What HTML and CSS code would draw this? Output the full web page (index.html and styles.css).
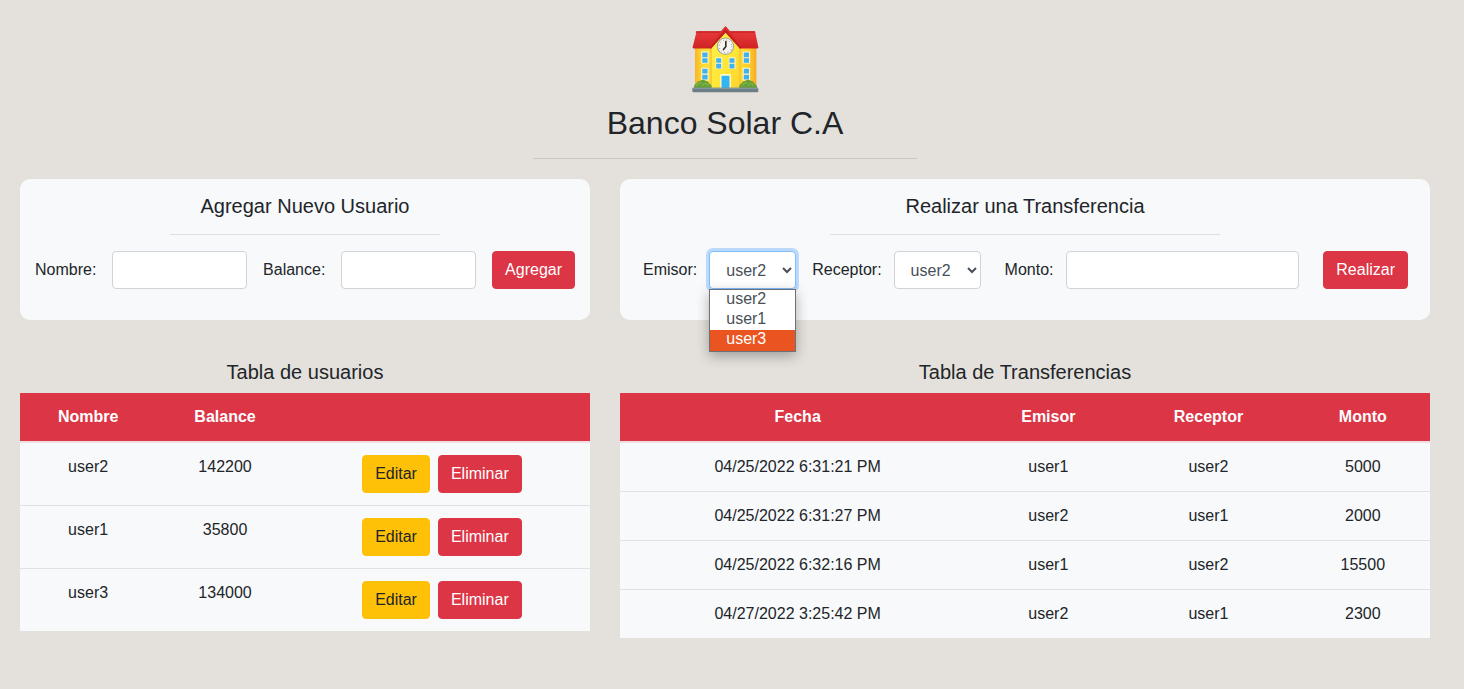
FILE: index.html
```html
<!DOCTYPE html>
<html lang="es">
<head>
<meta charset="utf-8">
<meta name="viewport" content="width=device-width, initial-scale=1">
<title>Banco Solar C.A</title>
<link rel="stylesheet" href="styles.css">
</head>
<body>
<header class="header">
  <svg class="logo" viewBox="20 18 202 202" aria-hidden="true">
    <defs>
      <linearGradient id="wall" x1="0" x2="1"><stop offset="0" stop-color="#fbb523"/><stop offset=".12" stop-color="#fdd835"/><stop offset=".5" stop-color="#ffe93b"/><stop offset=".88" stop-color="#fdd02f"/><stop offset="1" stop-color="#f9a825"/></linearGradient>
      <linearGradient id="front" x1="0" y1="0" x2="1" y2="1"><stop offset="0" stop-color="#fff04a"/><stop offset=".6" stop-color="#ffe636"/><stop offset="1" stop-color="#fdd22f"/></linearGradient>
      <linearGradient id="roof" x1="0" y1="0" x2="0" y2="1"><stop offset="0" stop-color="#e83a3a"/><stop offset="1" stop-color="#cf2323"/></linearGradient>
    </defs>
    <path d="M29 80h185v126H29z" fill="url(#wall)"/>
    <path d="M34 34h176l10 48q0 4-4 4H26q-4 0-4-4z" fill="url(#roof)"/>
    <path d="M33 34h177l1 4H31z" fill="#c72626"/>
    <path d="M79 78l42-49 42 49v128H79z" fill="url(#front)"/>
    <path d="M76 86h3v120h-3zM163 86h3v120h-3z" fill="#f7bb2b"/>
    <path d="M121 19l51 58q3 8-8 9l-43-48-43 48q-11-1-8-9z" fill="#c51f22"/>
    <path d="M121 19l51 58-5 2-46-52-46 52-5-2z" fill="#df3030"/>
    <circle cx="121" cy="79" r="26" fill="#9aa0a2"/>
    <circle cx="121" cy="79" r="23" fill="#f7f5ee"/>
    <circle cx="121" cy="79" r="19" fill="none" stroke="#8b8b88" stroke-width="3" stroke-dasharray="3 6.95"/>
    <path d="M122 65v15l-7 9" fill="none" stroke="#333" stroke-width="5" stroke-linecap="round" stroke-linejoin="round"/>
    <g fill="#fff9cf"><path d="M48 95h22v36H48zM48 144h22v38H48zM173 95h22v36h-22zM173 144h22v38h-22zM91 112h20v36H91zM131 112h20v36h-20zM105 163h32v43h-32z"/></g>
    <g fill="#42b1ed"><path d="M51 98h16v14H51zM51 115h16v14H51zM51 147h16v14H51zM51 165h16v14H51zM176 98h16v14h-16zM176 115h16v14h-16zM176 147h16v14h-16zM176 165h16v14h-16zM93 115h15v14H93zM93 132h15v14H93zM133 115h15v14h-15zM133 132h15v14h-15z"/></g>
    <path d="M109 168h24v38h-24z" fill="#35b4f4"/>
    <path d="M27 205q-3-11 6-14 3-8 12-8 8-6 16 0 9 1 11 8 9 3 7 14zM163 205q-3-11 6-14 3-8 12-8 8-6 16 0 9 1 11 8 9 3 8 14z" fill="#689f38"/>
    <path d="M34 197q6-9 13-7m5 6q9-10 17 1M171 197q6-9 13-7m5 6q9-10 17 1" fill="none" stroke="#7cb342" stroke-width="5" stroke-linecap="round"/>
    <rect x="21" y="204" width="199" height="14" rx="3" fill="#6c7f88"/>
    <path d="M22 204h197v4H22z" fill="#86979f"/>
  </svg>
  <h1 class="brand">Banco Solar C.A</h1>
  <hr class="brand-rule">
</header>
<main class="board">
  <section class="card">
    <h2 class="title">Agregar Nuevo Usuario</h2>
    <hr class="rule">
    <form class="user-form">
      <label for="nombre">Nombre:</label>
      <input class="control" id="nombre" type="text">
      <label for="balance">Balance:</label>
      <input class="control" id="balance" type="text">
      <button class="btn btn-danger" type="button">Agregar</button>
    </form>
  </section>

  <section class="card">
    <h2 class="title">Realizar una Transferencia</h2>
    <hr class="rule">
    <form class="transfer-form">
      <div class="pickers">
        <div class="field">
          <label for="emisor">Emisor:</label>
          <div class="picker">
            <select class="control picker-open" id="emisor"><option>user2</option><option>user1</option><option>user3</option></select>
            <ul class="menu" role="listbox" aria-label="Emisor">
              <li class="option" role="option">user2</li>
              <li class="option" role="option">user1</li>
              <li class="option option-active" role="option" aria-selected="true">user3</li>
            </ul>
          </div>
        </div>
        <div class="field">
          <label for="receptor">Receptor:</label>
          <select class="control" id="receptor"><option>user2</option><option>user1</option><option>user3</option></select>
        </div>
      </div>
      <div class="field field-grow">
        <label for="monto">Monto:</label>
        <input class="control" id="monto" type="text">
      </div>
      <button class="btn btn-danger" type="button">Realizar</button>
    </form>
  </section>

  <section class="listing">
    <h2 class="title">Tabla de usuarios</h2>
    <table class="table">
      <thead><tr><th>Nombre</th><th>Balance</th><th></th></tr></thead>
      <tbody>
        <tr><td>user2</td><td>142200</td><td><div class="actions"><button class="btn btn-warning" type="button">Editar</button><button class="btn btn-danger" type="button">Eliminar</button></div></td></tr>
        <tr><td>user1</td><td>35800</td><td><div class="actions"><button class="btn btn-warning" type="button">Editar</button><button class="btn btn-danger" type="button">Eliminar</button></div></td></tr>
        <tr><td>user3</td><td>134000</td><td><div class="actions"><button class="btn btn-warning" type="button">Editar</button><button class="btn btn-danger" type="button">Eliminar</button></div></td></tr>
      </tbody>
    </table>
  </section>

  <section class="listing">
    <h2 class="title">Tabla de Transferencias</h2>
    <table class="table">
      <thead><tr><th>Fecha</th><th>Emisor</th><th>Receptor</th><th>Monto</th></tr></thead>
      <tbody>
        <tr><td>04/25/2022 6:31:21 PM</td><td>user1</td><td>user2</td><td>5000</td></tr>
        <tr><td>04/25/2022 6:31:27 PM</td><td>user2</td><td>user1</td><td>2000</td></tr>
        <tr><td>04/25/2022 6:32:16 PM</td><td>user1</td><td>user2</td><td>15500</td></tr>
        <tr><td>04/27/2022 3:25:42 PM</td><td>user2</td><td>user1</td><td>2300</td></tr>
      </tbody>
    </table>
  </section>
</main>
</body>
</html>
```

FILE: styles.css
```css
*, *::before, *::after { box-sizing: border-box; }

body {
  margin: 0;
  padding: 26px 34px 26px 20px;
  background: #e4e1dc;
  color: #212529;
  font-family: "Liberation Sans", Arial, sans-serif;
  font-size: 16px;
  line-height: 24px;
}

.header { text-align: center; }
.logo { display: block; width: 67px; height: 67px; margin: 0 auto 11px; }
.brand { margin: 0; font-size: 32px; font-weight: 400; line-height: 38px; }

.brand-rule, .rule {
  height: 1px;
  margin: 16px auto;
  border: 0;
  background: rgba(0, 0, 0, .1);
}
.brand-rule { max-width: 384px; margin-bottom: 20px; }
.rule { width: 50%; }

.board {
  display: grid;
  grid-template-columns: 19fr 27fr;
  gap: 40px 30px;
  align-items: start;
}

.card { padding: 15px 15px 31px; border-radius: 10px; background: #f8f9fa; }
.title { margin: 0; font-size: 20px; font-weight: 400; line-height: 24px; text-align: center; }
.listing .title { margin-bottom: 9px; }

.user-form, .transfer-form, .pickers, .field { display: flex; align-items: center; }
.user-form, .pickers { gap: 16px; }
.transfer-form { gap: 24px; padding: 0 7px 0 8px; }
.field { gap: 12px; }
.field-grow { flex: 1; }

.control {
  height: 38px;
  padding: 6px 12px;
  border: 1px solid #ced4da;
  border-radius: 4px;
  background-color: #fff;
  color: #495057;
  font: inherit;
}
input.control { flex: 1; width: 0; min-width: 0; }

.picker { position: relative; display: flex; }
.picker-open { border-color: #80bdff; outline: 0; box-shadow: 0 0 0 3px rgba(0, 123, 255, .25); }
.menu {
  position: absolute;
  top: 100%;
  left: 0;
  right: 0;
  margin: 0;
  padding: 0 0 1px;
  border: 1px solid #6b7177;
  background: #e95420;
  box-shadow: 0 4px 12px rgba(0, 0, 0, .3);
  color: #495057;
  line-height: 18px;
  list-style: none;
}
.option { padding: 0 16px 2px; background: #fff; }
.option-active { background: #e95420; color: #fff; }

.btn {
  padding: 6px 12px;
  border: 1px solid transparent;
  border-radius: 4px;
  font: inherit;
  cursor: pointer;
}
.btn-danger { border-color: #dc3545; background: #dc3545; color: #fff; }
.btn-warning { border-color: #ffc107; background: #ffc107; color: #212529; }

.table { width: 100%; border-collapse: collapse; background: #f8f9fa; text-align: center; }
.table th, .table td { padding: 12px; vertical-align: top; }
.table th { border-bottom: 2px solid #f0dfe2; background: #dc3545; background-clip: padding-box; color: #fff; }
.table thead + tbody tr:first-child td { border-top: 0; }
.table td { border-top: 1px solid #dee2e6; }
.actions { display: flex; justify-content: center; gap: 8px; }
```
